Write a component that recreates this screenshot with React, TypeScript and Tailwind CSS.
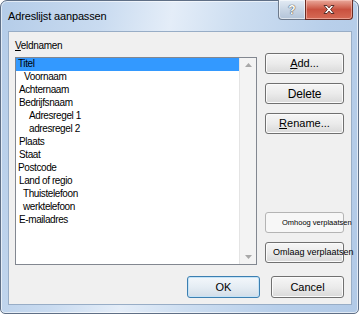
import React from 'react'

const items: { label: string; indent: number }[] = [
  { label: 'Titel', indent: 2 },
  { label: 'Voornaam', indent: 8 },
  { label: 'Achternaam', indent: 3 },
  { label: 'Bedrijfsnaam', indent: 3 },
  { label: 'Adresregel 1', indent: 13 },
  { label: 'adresregel 2', indent: 13 },
  { label: 'Plaats', indent: 3 },
  { label: 'Staat', indent: 3 },
  { label: 'Postcode', indent: 2 },
  { label: 'Land of regio', indent: 3 },
  { label: 'Thuistelefoon', indent: 7 },
  { label: 'werktelefoon', indent: 7 },
  { label: 'E-mailadres', indent: 3 },
]

// grey win7 push button look; size and font are set per button
const look =
  'rounded-[3px] border border-[#707070] bg-gradient-to-b from-[#f6f6f6] via-[#ebebeb] to-[#d9d9d9] shadow-[inset_0_0_0_1px_#fbfbfb] text-black flex items-center'
const side = `${look} h-[21px] w-[79px]`

const App: React.FC = () => {
  return (
    <div className="w-[359px] h-[314px] bg-white font-['Liberation_Sans',Arial,sans-serif]">
      <div className="w-full h-full flex flex-col rounded-t-[7px] rounded-b-[5px] border border-[#5f6f86] shadow-[inset_0_0_0_1px_rgba(255,255,255,0.6)] bg-[linear-gradient(100deg,#b4cce8_0%,#c9dbf0_25%,#e4edf8_42%,#cddef1_58%,#b8cfea_80%,#b2cae7_100%)]">
        {/* Title bar */}
        <div className="h-[30px] flex pl-[7px] pr-[5px] shrink-0">
          <div className="flex-1 self-center text-[11px] tracking-[-0.15px] text-black pt-[1px]">
            Adreslijst aanpassen
          </div>
          <div className="flex self-start -mt-[1px] h-[20px]">
            {/* help */}
            <div className="w-[27px] h-full rounded-bl-[4px] border border-[#6d7a8c] border-r-0 border-t-0 bg-gradient-to-b from-[#e3ebf4] via-[#c9d6e5] to-[#b3c4d8] shadow-[inset_0_0_0_1px_rgba(255,255,255,0.55)] flex items-center justify-center">
              <span className="text-[12px] font-bold leading-none text-white [text-shadow:0_0_1px_#333,0_0_1px_#333]">?</span>
            </div>
            {/* close */}
            <div className="w-[48px] h-full rounded-br-[4px] border border-[#6b2b22] border-t-0 bg-gradient-to-b from-[#e9a99c] via-[#c9513f] to-[#d66a55] shadow-[inset_0_0_0_1px_rgba(255,210,200,0.5)] flex items-center justify-center">
              <svg width="14" height="11" viewBox="0 0 14 11">
                <path
                  d="M2 1.5h3l2 2.4 2-2.4h3L8.6 5.5 12 9.5H9L7 7.1 5 9.5H2l3.4-4z"
                  fill="#fff"
                  stroke="#4a2420"
                  strokeWidth="0.9"
                  strokeLinejoin="round"
                />
              </svg>
            </div>
          </div>
        </div>

        {/* Client area */}
        <div className="flex-1 ml-[7px] mr-[6px] mb-[8px] border border-[#98adc6] bg-[#f0f0f0] flex flex-col">
          <div className="flex">
            {/* Left: label + list */}
            <div className="ml-[6px] w-[242px] flex flex-col">
              <div className="mt-[7px] h-[13px] leading-[13px] text-[10px] tracking-[-0.3px] text-black">
                <span className="underline">V</span>eldnamen
              </div>
              <div className="mt-[5px] h-[208px] border border-[#828790] bg-white flex">
                <div className="flex-1 flex flex-col">
                  {items.map((it, i) => (
                    <div
                      key={it.label}
                      className={`h-[13px] leading-[12px] text-[10px] tracking-[-0.4px] text-black whitespace-nowrap ${
                        i === 0 ? 'bg-[#3399ff]' : ''
                      }`}
                      style={{ paddingLeft: it.indent }}
                    >
                      {it.label}
                    </div>
                  ))}
                </div>
                <div className="w-[17px] bg-[#f3f3f3] border-l border-[#e4e4e4] flex flex-col items-center justify-between py-[5px]">
                  <svg width="7" height="4" viewBox="0 0 7 4">
                    <path d="M0 4L3.5 0 7 4z" fill="#a8a8a8" />
                  </svg>
                  <svg width="7" height="4" viewBox="0 0 7 4">
                    <path d="M0 0L3.5 4 7 0z" fill="#a8a8a8" />
                  </svg>
                </div>
              </div>
            </div>

            {/* Right: buttons */}
            <div className="ml-[8px] w-[79px] flex flex-col">
              <div className={`${side} mt-[21px] justify-center text-[11px]`}>
                <span>
                  <span className="underline">A</span>dd...
                </span>
              </div>
              <div className={`${side} mt-[9px] justify-center text-[12px] tracking-[-0.2px]`}>Delete</div>
              <div className={`${side} mt-[9px] justify-center text-[11px]`}>
                <span>
                  <span className="underline">R</span>ename...
                </span>
              </div>
              <div className="mt-[78px] h-[21px] w-[79px] rounded-[3px] border border-[#b4b4b4] bg-[#f7f7f7] flex items-center pl-[16px] whitespace-nowrap overflow-visible text-[7.5px] text-black">
                Omhoog verplaatsen
              </div>
              <div className={`${side} mt-[9px] justify-start pl-[7px] whitespace-nowrap overflow-visible text-[9px]`}>
                Omlaag verplaatsen
              </div>
            </div>
          </div>

          {/* Bottom buttons */}
          <div className="mt-[11px] flex justify-end gap-[11px] pr-[7px]">
            <div className="h-[22px] w-[73px] rounded-[3px] border border-[#3c7fb1] bg-gradient-to-b from-[#f3f7fb] via-[#e5edf4] to-[#d2dde8] shadow-[inset_0_0_0_1px_#c4e3f7] text-[11px] text-black flex items-center justify-center">
              OK
            </div>
            <div className={`${look} h-[22px] w-[73px] justify-center text-[11px]`}>Cancel</div>
          </div>
        </div>
      </div>
    </div>
  )
}

export default App
